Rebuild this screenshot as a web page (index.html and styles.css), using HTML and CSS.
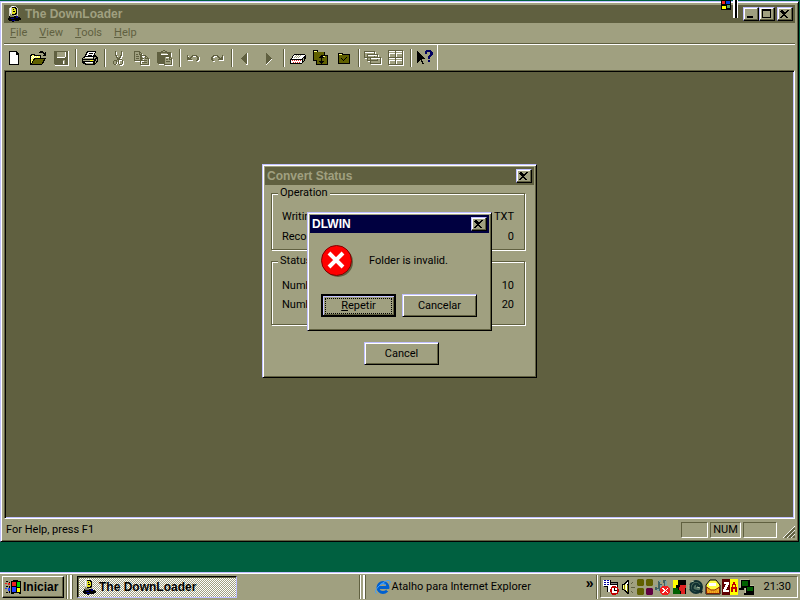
FILE: index.html
```html
<!DOCTYPE html>
<html lang="pt-BR">
<head>
    <meta charset="UTF-8">
    <meta name="viewport" content="width=device-width, initial-scale=1.0">
    <title>The DownLoader</title>
    <link rel="stylesheet" href="styles.css">
</head>
<body>
    <!-- Shared glyphs -->
    <svg class="defs" shape-rendering="crispEdges">
        <symbol id="close" viewBox="0 0 12 10">
            <path d="M2 1h2v1h1v1h2v-1h1v-1h2v1h-1v1h-1v1h-1v1h-1v1h1v1h1v1h1v1h-2v-1h-1v-1h-2v1h-1v1h-2v-1h1v-1h1v-1h1v-1h-1v-1h-1v-1h-1z"/>
        </symbol>
        <symbol id="app" viewBox="0 0 16 16">
            <path fill="#d0d0c0" d="M3 2h1V1h1V0h5v1h1v1h1v8H3z"/>
            <path d="M6 1h4v1h1v7H6zM3 10h9v1h2v1h1v2h-2v1H8v1H6v-1H3v-1H2v-2h1z"/>
            <path fill="#e0e020" d="M6 2h3v1h1v4H9v1H6z"/>
            <path d="M7 3h1v1H7zM7 5h2v1H7z"/>
            <path fill="#808060" d="M4 8h1v3H4zM5 9h3v2H5zM10 8h1v2h-1z"/>
            <path fill="#000080" d="M5 12h3v1H5zM10 10h2v2h-2zM6 14h3v1H6z"/>
            <path fill="#fff" d="M4 2h1v5H4zM6 0h2v1H6z"/>
        </symbol>
    </svg>

    <div class="window main-window">
        <header class="title-bar">
            <svg class="icon" shape-rendering="crispEdges"><use href="#app"/></svg>
            <h1>The DownLoader</h1>
            <button class="caption-btn" aria-label="Minimize"><svg viewBox="0 0 12 10" shape-rendering="crispEdges"><path d="M2 7h6v2H2z"/></svg></button>
            <button class="caption-btn" aria-label="Maximize"><svg viewBox="0 0 12 10" shape-rendering="crispEdges"><path d="M1 0h9v9H1zM2 2v6h7V2z" fill-rule="evenodd"/></svg></button>
            <button class="caption-btn close" aria-label="Close"><svg shape-rendering="crispEdges"><use href="#close"/></svg></button>
        </header>

        <nav class="menu">
            <a href="#"><u>F</u>ile</a>
            <a href="#"><u>V</u>iew</a>
            <a href="#"><u>T</u>ools</a>
            <a href="#"><u>H</u>elp</a>
        </nav>

        <div class="toolbar">
            <button aria-label="New">
                <svg viewBox="0 0 16 16" shape-rendering="crispEdges"><path d="M2 1h8v1h1v1h1v12H2z"/><path fill="#fff" d="M3 2h6v3h2v9H3z"/></svg>
            </button>
            <button aria-label="Open">
                <svg viewBox="0 0 16 16" shape-rendering="crispEdges"><path d="M9 2h1V1h3v1h1v1h1V2h1v4h-3V5h1V4h-1V3H9zM0 5h1V4h4v1h6v3h5v1h-1v2h-1v2h-1v1h-1v1H0z"/><path fill="#ff6" d="M1 6h1V5h2v1h6v2H4v1H3v2H2v2H1z"/><path fill="#fff" d="M1 6h1v1H1zM3 6h1v1H3zM5 6h1v1H5zM7 6h1v1H7zM2 7h1v1H2zM4 7h1v1H4zM1 8h1v1H1z"/><path fill="#606000" d="M5 9h9v1h-1v2h-1v2H2v-1h1v-2h1v-1h1z"/></svg>
            </button>
            <button aria-label="Save" class="off">
                <svg viewBox="0 0 16 16" shape-rendering="crispEdges"><path fill="#606040" d="M1 1h14v14H2v-1H1z"/><path fill="#a0a080" d="M4 2h8v6H4zM10 10h2v4h-2z"/><path fill="#fff" d="M15 1h1v15H2v-1h13zM4 7h8v1H4zM12 2h1v5h-1zM10 11h1v3h-1z"/></svg>
            </button>
            <i class="sep"></i>
            <button aria-label="Print">
                <svg viewBox="0 0 16 16" shape-rendering="crispEdges"><path d="M5 1h9v2h-1v2h1v1h1v1h1v5h-1v1h-1v1h-1v1H3v-1H1v-1H0V8h1V7h1V6h1V4h1V2h1z"/><path fill="#fff" d="M6 2h7v1h-1v2h-1v1H4V5h1V3h1zM3 7h8v1H3zM3 12h8v1H3z"/><path d="M7 3h4v1H7zM6 5h4v1H6z"/><path fill="#a0a080" d="M1 8h10v1H1zM1 10h11v1H1zM12 7h2v1h-1v1h-1zM14 9h1v2h-1zM13 11h1v2h-1zM4 13h7v1H4z"/><path fill="#ff0" d="M8 10h3v1H8z"/></svg>
            </button>
            <i class="sep"></i>
            <button aria-label="Cut">
                <svg viewBox="0 0 16 16" shape-rendering="crispEdges"><path fill="#fff" d="M5 2h1v4h1v2h1v1h1V8h1V6h1V2h1v5h-1v2h-1v1h2v1h1v4h-1v1H9v-1H8v-3H7v2H6v1H3v-1h3v-2h1V9H6V7H5zM9 11v3h2v-3z"/><path fill="#606040" d="M4 1h1v4h1v2h1v1h1V7h1V5h1V1h1v5h-1v2H9v1h2v1h1v4h-1v1H8v-1H7v-4H6v4H5v1H3v-1H2v-3h1v-1h3V8H5V6H4zM3 11v3h2v-3zM8 10v4h3v-4z"/></svg>
            </button>
            <button aria-label="Copy">
                <svg viewBox="0 0 16 16" shape-rendering="crispEdges"><path fill="none" stroke="#fff" d="M1.500 2.500h5l3 3v6h-8zM7.500 6.500h5l3 3v6h-8z"/><path fill="#a0a080" d="M1 2h5v3h1v6H1z"/><path fill="none" stroke="#606040" d="M.5 1.500h5l2 2v7h-7zM6.500 5.500h5l3 3v6h-8zM5.500 1.500v3h2M11.500 5.500v3h3M2 4.500h2M2 6.500h3M2 8.500h3M8 8.500h2M8 10.500h5M8 12.500h5"/></svg>
            </button>
            <button aria-label="Paste">
                <svg viewBox="0 0 16 16" shape-rendering="crispEdges"><path fill="#606040" d="M0 2h4V1h2V0h2v1h2v1h4v5h-6v7H1v-1H0z"/><path fill="#a0a080" d="M4 3h6v1H4zM6 1h2v1H6zM8 7h5l3 3v6H7z"/><path fill="none" stroke="#fff" d="M4 4.500h7M2 14.500h5M14.500 3v4M8.500 7.500h5l2 2v6h-8"/><path fill="none" stroke="#606040" d="M7.500 6.500h5l2 2v6h-7zM9 9.500h2M9 11.500h4M12.500 7v2h2"/></svg>
            </button>
            <i class="sep"></i>
            <button aria-label="Undo">
                <svg viewBox="0 0 16 16" shape-rendering="crispEdges"><path fill="#fff" d="M2 6h1v3h1v1h3v1H2zM7 6h5v1h2v4h-1v1h-2v-1h1V8h-1V7H7z"/><path fill="#606040" d="M1 5h1v2h1v1h1V7h1V6h1V5h5v1h1v1h1v3h-1v1h-2v-1h1V7h-1V6H7v1H6v1H5v1h1v1H1z"/></svg>
            </button>
            <button aria-label="Redo">
                <svg viewBox="0 0 16 16" shape-rendering="crispEdges"><path fill="#fff" d="M14 6h1v5h-5v-1h4zM4 6h6v1H6v1H4v2h1v1h1v1H4v-1H3V7h1z"/><path fill="#606040" d="M14 5h-1v2h-1v1h-1V7h-1V6H9V5H4v1H3v1H2v3h1v1h2v-1H4V7h1V6h3v1h1v1h1v1H9v1h5z"/></svg>
            </button>
            <i class="sep"></i>
            <button aria-label="Previous">
                <svg viewBox="0 0 16 16" shape-rendering="crispEdges"><path fill="#606040" d="M8 3h1v11H8v-1H7v-1H6v-1H5v-1H4V9H3V8h1V7h1V6h1V5h1V4h1z"/><path fill="#fff" d="M9 3h1v12H8v-1h1z"/></svg>
            </button>
            <button aria-label="Next">
                <svg viewBox="0 0 16 16" shape-rendering="crispEdges"><path fill="#fff" d="M10 8h1v2h-1v1H9v1H8v1H7v1H6v1H5v-2h1v-1h1v-1h1v-1h1V9h1z"/><path fill="#606040" d="M5 3h1v1h1v1h1v1h1v1h1v1h1v1h-1v1H9v1H8v1H7v1H6v1H5z"/></svg>
            </button>
            <i class="sep"></i>
            <button aria-label="Drive">
                <svg viewBox="0 0 16 16" shape-rendering="crispEdges"><path d="M4 4h11v1h1v4h-1v2h-1v1h-1v1h-1v1H0V9h1V8h1V6h1V5h1z"/><path fill="#fff" d="M4 5h11v1h-1v1h-1v1h-1v1H2V8h1V6h1zM1 10h11v3H1z"/><path fill="#a0a080" d="M6 5h1v1H6zM8 5h1v1H8zM10 5h1v1h-1zM5 6h1v1H5zM7 6h1v1H7zM9 6h1v1H9zM4 7h1v1H4zM6 7h1v1H6zM8 7h1v1H8zM13 8h1v3h-1z"/><path fill="#e02020" d="M2 10h1v1H2zM4 10h1v1H4zM6 10h1v1H6zM8 10h1v1H8zM10 10h1v1h-1zM3 12h1v1H3zM5 12h1v1H5zM7 12h1v1H7zM9 12h1v1H9z"/></svg>
            </button>
            <button aria-label="Move to folder">
                <svg viewBox="0 0 16 16" shape-rendering="crispEdges"><path d="M0 0h5v2h7v3h3v10H3V11H0z"/><path fill="#606000" d="M1 2h10v3H8v5H1zM4 8h10v6H4zM10 6h4v2h-4z"/><path fill="#ffff80" d="M1 1h3v1H1zM9 6h3v1H9z"/><path d="M8 5h1v1h1v1h1v1H9v3h2v1h-1v1H9v1H8v-1H7v-1H6v-1h2V8H6V7h1V6h1z"/></svg>
            </button>
            <button aria-label="Check folder">
                <svg viewBox="0 0 16 16" shape-rendering="crispEdges"><path d="M2 3h5v1h7v10H2z"/><path fill="#606000" d="M3 5h10v8H3z"/><path fill="#ffff80" d="M3 4h3v1H3z"/><path d="M5 8h1v1h1v1h1V9h1V8h1V7h1v1h-1v1H9v1H8v1H7v-1H6V9H5z"/></svg>
            </button>
            <i class="sep"></i>
            <button aria-label="Cascade">
                <svg class="wide" viewBox="0 0 18 16" shape-rendering="crispEdges"><path fill="none" stroke="#fff" d="M1.500 2.500h10v6h-10zM4.500 5.500h10v6h-10zM7.500 8.500h10v6h-10z"/><path fill="#a0a080" stroke="#606040" d="M.5 1.500h10v6H.5zM3.500 4.500h10v6h-10zM6.500 7.500h10v6h-10z"/><path fill="none" stroke="#fff" d="M1 2.500h9M4 5.500h9M7 8.500h9"/></svg>
            </button>
            <button aria-label="Tile">
                <svg viewBox="0 0 16 16" shape-rendering="crispEdges"><path fill="#606040" d="M0 0h15v15H0z"/><path fill="#a0a080" d="M1 2h6v5H1zM8 2h6v5H8zM1 9h6v5H1zM8 9h6v5H8z"/><path fill="#fff" d="M1 1h6v1H1zM8 1h6v1H8zM1 3h6v1H1zM8 3h6v1H8zM1 8h6v1H1zM8 8h6v1H8zM1 10h6v1H1zM8 10h6v1H8zM15 1h1v15H1v-1h14zM1 3h1v4H1zM8 3h1v4H8zM1 10h1v4H1zM8 10h1v4H8z"/></svg>
            </button>
            <i class="sep"></i>
            <button aria-label="Context help">
                <svg class="wide" viewBox="0 0 18 16" shape-rendering="crispEdges"><path d="M1 1h1v1h1v1h1v1h1v1h1v1h1v1h1v1h1v1H6v2h1v2h1v1H6v-2H5v-2H4v1H3v1H2v1H1z"/><path fill="#000060" d="M10 0h5v1h1v1h1v3h-1v1h-1v1h-1v2h-2V6h1V5h1V2h-3v2H9V1h1zM12 10h2v2h-2z"/></svg>
            </button>
        </div>

        <main class="client"></main>

        <footer class="status-bar">
            <span class="message">For Help, press F1</span>
            <span class="pane"></span>
            <span class="pane num">NUM</span>
            <span class="pane last"></span>
            <svg class="grip" viewBox="0 0 12 12"><path stroke="#fff" d="M0 12L12 0M4 12l8-8M8 12l4-4"/><path stroke="#606040" stroke-width="2" d="M2 12L12 2M6 12l6-6M10 12l2-2"/></svg>
        </footer>
    </div>

    <!-- Floating shortcut bar, docked at the top edge -->
    <div class="shortcut">
        <svg viewBox="0 0 10 10" shape-rendering="crispEdges"><path d="M0 0h10v10H0z"/><path fill="#f02020" d="M1 1h3v3H1z"/><path fill="#0040e0" d="M5 1h4v3H5z"/><path fill="#ff0" d="M1 6h4v3H1z"/><path fill="#60a060" d="M6 5h3v3H6z"/></svg>
        <i></i>
    </div>

    <section class="window dialog convert">
        <header class="title-bar">
            <h2>Convert Status</h2>
            <button class="caption-btn close" aria-label="Close"><svg shape-rendering="crispEdges"><use href="#close"/></svg></button>
        </header>
        <div class="convert-body">
            <fieldset>
                <legend>Operation</legend>
                <p><span>Writing</span><span>TXT</span></p>
                <p><span>Record</span><span>0</span></p>
            </fieldset>
            <fieldset class="totals">
                <legend>Status</legend>
                <p><span>Number</span><span>10</span></p>
                <p><span>Number</span><span>20</span></p>
            </fieldset>
            <button class="btn">Cancel</button>
        </div>
    </section>

    <section class="window dialog error" role="alertdialog">
        <header class="title-bar active">
            <h2>DLWIN</h2>
            <button class="caption-btn close" aria-label="Close"><svg shape-rendering="crispEdges"><use href="#close"/></svg></button>
        </header>
        <div class="error-message">
            <svg viewBox="0 0 32 32"><circle cx="17" cy="17" r="15" fill="#606040"/><circle cx="15.500" cy="15.500" r="15" fill="#f00" stroke="#800000"/><path stroke="#fff" stroke-width="4" d="M8 8l14 14M22 8L8 22"/></svg>
            <p>Folder is invalid.</p>
        </div>
        <div class="error-buttons">
            <button class="btn default"><span><u>R</u>epetir</span></button>
            <button class="btn">Cancelar</button>
        </div>
    </section>

    <footer class="taskbar">
        <button class="start">
            <svg viewBox="0 0 18 16" shape-rendering="crispEdges"><path d="M6 2h2V1h5v1h3v13h-2v-1H9v1H6zM4 3h1v2H4zM4 7h1v2H4zM4 12h1v2H4zM1 2h2v1H1zM1 7h2v1H1zM1 13h2v1H1z"/><path fill="#f02020" d="M7 3h4v4H7zM3 4h2v2H3zM0 4h2v1H0z"/><path fill="#00d000" d="M12 3h3v5h-3z"/><path fill="#2040ff" d="M7 8h4v5H7zM3 9h2v3H3zM0 9h2v1H0z"/><path fill="#ff0" d="M12 9h3v4h-3z"/></svg>
            Iniciar
        </button>
        <i class="handle"></i>
        <button class="task">
            <svg shape-rendering="crispEdges"><use href="#app"/></svg>
            The DownLoader
        </button>
        <i class="handle"></i>
        <div class="links">
            <a href="#">
                <svg viewBox="0 0 16 16"><circle cx="8" cy="8.500" r="5" fill="none" stroke="#0060d0" stroke-width="3"/><path fill="#0060d0" d="M4 7h10v3H4z"/><path fill="#a0a080" d="M11 10h5v2h-4z"/><path fill="none" stroke="#40a0ff" d="M2 14C-1 15 0 11 4 7S14 0 15 2s-1 3-1 3M5 5.500q3-2 6 0"/></svg>
                Atalho para Internet Explorer
            </a>
            <button class="more" aria-label="More">»</button>
        </div>
        <i class="line"></i>
        <div class="tray">
            <svg viewBox="0 0 16 16" shape-rendering="crispEdges"><path d="M1 1h7v2h7v12H8v-2H4V8H1z"/><path fill="#fff" d="M0 1h7v6H0zM5 6h9v7H5z"/><path fill="#0000a0" d="M1 1h2v1H1zM4 1h2v1H4zM1 3h2v1H1zM4 3h2v1H4zM1 5h2v1H1zM4 5h2v1H4z"/><path fill="#808080" d="M8 4h6v1H8z"/><path fill="#c00000" d="M9 7h4v1h2v2h1v3h-1v2h-2v1H9v-1H8v-2H7v-3h1V8h1z"/><path fill="#fff" d="M9 9h5v5H9z"/><path d="M11 9h1v2h2v1h-3z"/></svg>
            <svg viewBox="0 0 16 16" shape-rendering="crispEdges"><path d="M2 5h2V4h1V3h1V2h1V1h2v14H7v-1H6v-1H5v-1H4v-1H2z"/><path fill="#ff8" d="M3 6h1v4H3zM5 5h1v6H5z"/><path fill="#fff" d="M6 4h1v8H6zM7 3h1v2H7z"/><path fill="#808000" d="M4 6h1v5H4zM7 6h1v7H7z"/><path fill="#606040" d="M11 4h1v1h-1zM12 3h1v1h-1zM11 8h4v1h-4zM11 12h1v1h-1zM12 13h1v1h-1z"/></svg>
            <svg viewBox="0 0 16 16"><path fill="#606000" d="M1 0h5l1 1v5l-1 1H1L0 6V1zM10 0h5l1 1v5l-1 1h-5L9 6V1zM1 9h5l1 1v5l-1 1H1l-1-1v-5z"/><path fill="#600040" d="M10 9h5l1 1v5l-1 1h-5l-1-1v-5z"/></svg>
            <svg viewBox="0 0 16 16" shape-rendering="crispEdges"><path fill="#406060" d="M4 2h2v3h2v2H6v3h1v2H3V9h1zM9 1h3v6h-1v3H8V7h2V4H9zM1 8h2v3H1z"/><path fill="#80a0a0" d="M5 1h2v2H5zM11 2h2v6h-2zM3 10h2v2H3zM6 6h2v3H6zM1 6h2v1H1z"/><path fill="#f02020" d="M8 7h6v1h1v1h1v5h-1v1h-1v1H8v-1H7v-1H6V9h1V8h1z"/><path fill="#fff" d="M8 9h2v1h1v1h1v-1h1V9h1v1h-1v1h-1v1h1v1h1v1h-1v-1h-1v-1h-1v1h-1v1H8v-1h1v-1h1v-1H9v-1H8z"/></svg>
            <svg viewBox="0 0 16 16" shape-rendering="crispEdges"><path d="M2 1h13v14H2z"/><path fill="#ff0" d="M2 1h5v5H5v3H2z"/><path fill="#e02020" d="M9 6h6v3h-1v6h-4v-3H8V8h1z"/><path fill="#006000" d="M2 9h5v2h2v4H2z"/></svg>
            <svg viewBox="0 0 16 16"><circle cx="8" cy="8" r="6" fill="#507060" stroke="#103030" stroke-width="2"/><path fill="none" stroke="#103030" stroke-width="2" d="M11 6Q7 3 5 7t4 5 3-5H8"/><path stroke="#b0c0a0" d="M3 3l3-1M9 8l3 1M1 6v4"/><path fill="#102020" d="M11 11l4 1-2 3z"/></svg>
            <svg viewBox="0 0 16 16"><path fill="#ff4" stroke="#000" d="M1 6l4-5h6l4 5v9H1z"/><path fill="#fff" d="M4 4h7v3H4z"/><path fill="#f0b020" stroke="#802000" d="M1.500 8L6 11h4l4.500-3v6.500h-13z"/><path fill="none" stroke="#e07010" stroke-dasharray="1 1" d="M3 11h10M2 13h12"/></svg>
            <svg viewBox="0 0 16 16" shape-rendering="crispEdges"><path fill="#600000" d="M0 0h8v16H0z"/><path fill="#ff0" d="M8 0h8v16H8z"/><path fill="#fff" d="M2 3h5v3H6v2H5v2H4v1h3v2H1v-3h1V8h1V6h1V5H2z"/><path fill="#c00000" d="M11 3h2v2h1v3h1v5h-2v-3h-2v3H9V8h1V5h1zM11 6v2h2V6z"/></svg>
            <svg viewBox="0 0 16 16" shape-rendering="crispEdges"><path fill="#c0c0a0" d="M1 0h9v8H1zM6 6h9v8H6z"/><path d="M2 1h9v8H2zM7 7h8v7H7zM0 9h5v2H0zM5 14h10v2H5z"/><path fill="#006000" d="M3 2h6v5H3zM8 8h6v4H8z"/></svg>
            <time>21:30</time>
        </div>
    </footer>
</body>
</html>
```
FILE: styles.css
```css
:root {
    --face: #a0a080;
    --dark: #606040;
    --light: #c0c0ff;
    --desktop: #006040;
    --navy: #000040;
}

* {
    margin: 0;
    padding: 0;
    box-sizing: border-box;
}

body {
    font: 11px/14px "Roboto", sans-serif;
    background: var(--desktop);
    color: #000;
    height: 100vh;
    display: flex;
    flex-direction: column;
    padding-top: 1px;
    overflow: hidden;
}

button {
    font: inherit;
    color: inherit;
    background: var(--face);
    border: none;
}

a {
    color: inherit;
    text-decoration: none;
}

svg {
    display: block;
    flex: none;
}

.defs {
    position: absolute;
    width: 0;
    height: 0;
}

/* Windows */
.window {
    background: var(--face);
    border: 1px solid;
    border-color: var(--light) #000 #000 var(--light);
    box-shadow: inset 1px 1px 0 #fff, inset -1px -1px 0 var(--dark);
    padding: 2px;
}

.main-window {
    flex: 1;
    display: flex;
    flex-direction: column;
    margin: 0 1px 30px 0;
    padding: 3px;
}

.title-bar {
    display: flex;
    align-items: center;
    height: 18px;
    padding: 0 2px;
    background: var(--dark);
    color: var(--face);
}

.title-bar.active {
    background: var(--navy);
    color: #fff;
}

.title-bar h1,
.title-bar h2 {
    flex: 1;
    font: bold 12px/18px "Liberation Sans", sans-serif;
}

.title-bar .icon {
    width: 16px;
    height: 16px;
    margin-right: 3px;
}

.caption-btn {
    width: 16px;
    height: 14px;
    padding: 1px;
    border: 1px solid;
    border-color: var(--light) #000 #000 var(--light);
    box-shadow: inset -1px -1px 0 var(--dark), inset 1px 1px 0 #fff;
    color: #000;
}

.caption-btn svg {
    width: 12px;
    height: 10px;
}

.main-window .close {
    margin-left: 2px;
}

/* Menu and toolbar */
.menu {
    display: flex;
    gap: 12px;
    height: 22px;
    padding: 3px 6px;
    color: var(--dark);
    border-bottom: 1px solid #fff;
    box-shadow: inset 0 -1px 0 var(--dark);
}

.toolbar {
    display: flex;
    align-items: center;
    align-self: flex-start;
    height: 25px;
    border-right: 1px solid #fff;
}

.toolbar button {
    display: flex;
    align-items: center;
    justify-content: center;
    width: 23px;
    height: 22px;
    padding-right: 1px;
}

.toolbar svg {
    width: 16px;
    height: 16px;
}

.toolbar .wide {
    width: 18px;
}

.sep {
    width: 2px;
    height: 18px;
    margin: 0 2px;
    background: linear-gradient(90deg, var(--dark) 50%, #fff 50%);
}

.client {
    flex: 1;
    background: var(--dark);
    border: 1px solid;
    border-color: var(--dark) #fff #fff var(--dark);
    box-shadow: inset 1px 1px 0 #000, inset -1px -1px 0 var(--light);
}

/* Status bar */
.status-bar {
    display: flex;
    align-items: center;
    gap: 2px;
    height: 19px;
    padding-top: 2px;
}

.message {
    flex: 1;
    padding-left: 2px;
}

.pane {
    width: 27px;
    height: 16px;
    border: 1px solid;
    border-color: var(--dark) #fff #fff var(--dark);
}

.pane.num {
    width: 31px;
    text-align: center;
}

.pane.last {
    width: 34px;
}

.grip {
    width: 12px;
    height: 12px;
    margin-left: 4px;
    align-self: flex-end;
}

.shortcut {
    position: absolute;
    top: 0;
    right: 62px;
    display: flex;
    gap: 2px;
}

.shortcut svg {
    width: 10px;
    height: 10px;
}

.shortcut i {
    width: 5px;
    height: 18px;
    border-left: 2px solid #fff;
    border-right: 1px solid #fff;
    background: #000;
}

/* Dialogs */
.dialog {
    position: absolute;
}

.btn {
    width: 75px;
    height: 23px;
    border: 1px solid;
    border-color: var(--light) #000 #000 var(--light);
    box-shadow: inset 1px 1px 0 #fff, inset -1px -1px 0 var(--dark);
}

.btn.default {
    padding: 2px;
    border: 2px solid #000;
    box-shadow: inset 1px 1px 0 var(--light), inset -1px -1px 0 var(--dark);
}

.btn.default span {
    display: block;
    border: 1px dotted #000;
}

.convert {
    left: 262px;
    top: 164px;
    width: 275px;
}

.convert-body {
    display: flex;
    flex-direction: column;
    padding: 1px 9px 10px 6px;
}

fieldset {
    border: 1px solid var(--dark);
    box-shadow: 1px 1px 0 #fff, inset 1px 1px 0 #fff;
    padding: 7px 10px 2px;
    margin-bottom: 4px;
}

fieldset.totals {
    padding: 8px 10px 10px;
    margin-bottom: 17px;
}

legend {
    margin-left: -4px;
    padding: 0 2px;
    background: var(--face);
}

fieldset p {
    display: flex;
    justify-content: space-between;
    line-height: 20px;
}

.totals p {
    line-height: 19px;
}

.convert .btn {
    align-self: flex-end;
    margin-right: 86px;
}

.error {
    left: 307px;
    top: 212px;
    width: 185px;
}

.error-message {
    display: flex;
    align-items: center;
    gap: 16px;
    padding: 12px 11px 17px;
}

.error-message svg {
    width: 32px;
    height: 32px;
}

.error-buttons {
    display: flex;
    gap: 6px;
    padding: 0 11px 11px;
}

/* Taskbar */
.taskbar {
    display: flex;
    align-items: center;
    gap: 2px;
    height: 28px;
    padding: 1px 2px 0;
    background: var(--face);
    border-top: 1px solid var(--light);
    box-shadow: inset 0 1px 0 #fff;
}

.start,
.task {
    display: flex;
    align-items: center;
    gap: 2px;
    height: 22px;
    font: bold 12px/14px "Liberation Sans", sans-serif;
}

.start {
    width: 62px;
    padding-left: 2px;
    gap: 0;
    border: 1px solid;
    border-color: #fff #000 #000 #fff;
    box-shadow: inset -1px -1px 0 var(--dark);
}

.start svg {
    width: 18px;
    height: 16px;
}

.task {
    width: 160px;
    padding-left: 3px;
    border: 1px solid;
    border-color: #000 var(--light) var(--light) #000;
    box-shadow: inset 1px 1px 0 var(--dark);
    background: repeating-conic-gradient(#fff 0 25%, var(--face) 0 50%) 0 0 / 2px 2px;
}

.task svg,
.links svg,
.tray svg {
    width: 16px;
    height: 16px;
}

.handle {
    width: 7px;
    height: 24px;
    margin-right: 2px;
    border-left: 1px solid var(--dark);
    background: linear-gradient(90deg, #fff 1px, transparent 1px 3px, #fff 3px 5px, var(--dark) 5px);
}

.task + .handle {
    margin-left: auto;
}

.links {
    display: flex;
    align-items: center;
    justify-content: space-between;
    flex: 0 1 224px;
    padding-left: 5px;
}

.links a {
    display: flex;
    align-items: center;
    gap: 1px;
    white-space: nowrap;
}

.more {
    height: 22px;
    padding-bottom: 8px;
    font: bold 14px/14px "Liberation Sans", sans-serif;
}

.line {
    width: 2px;
    height: 24px;
    background: linear-gradient(90deg, var(--dark) 50%, #fff 50%);
}

.tray {
    display: flex;
    align-items: center;
    gap: 1px;
    height: 22px;
    padding: 0 6px 0 2px;
    border: 1px solid;
    border-color: var(--dark) #fff #fff var(--dark);
}

.tray time {
    margin-left: 8px;
}
```
